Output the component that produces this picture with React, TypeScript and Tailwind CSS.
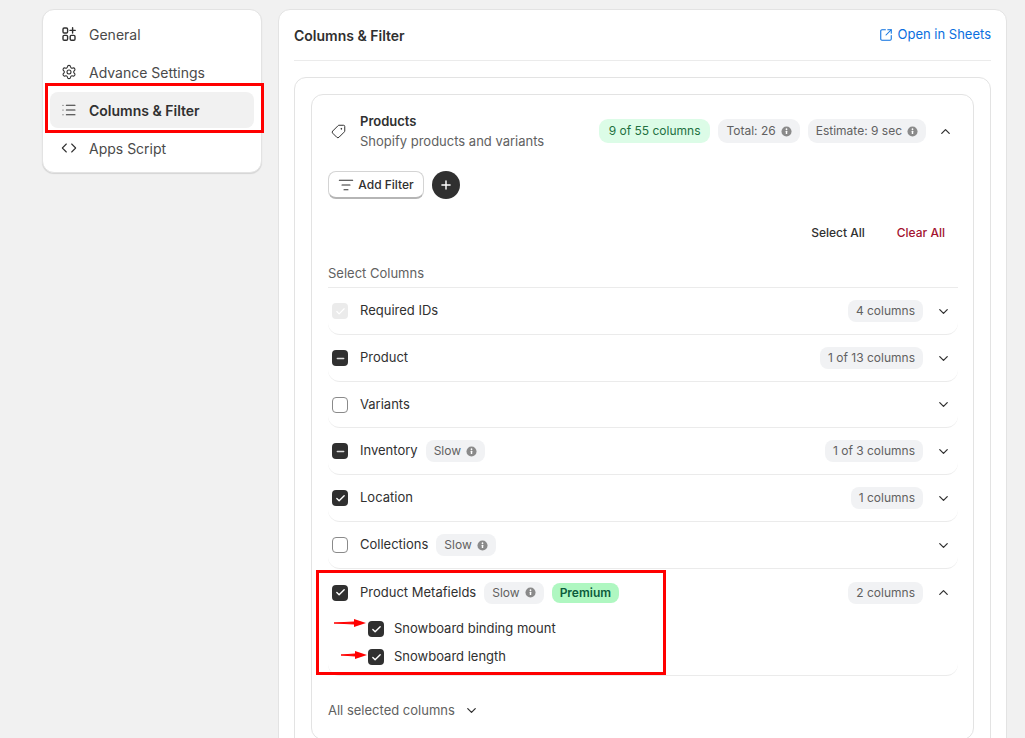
import React from "react";
import { Settings, List, Code, Tag, SquareArrowOutUpRight, ChevronDown, ChevronUp, ListFilter, Plus, Check, Minus } from "lucide-react";

function Info({ cls = "" }: { cls?: string }) {
  return (
    <svg viewBox="0 0 12 12" className={"w-[11px] h-[11px] shrink-0 " + cls}>
      <circle cx="6" cy="6" r="5.5" fill="#8a8a8a" />
      <rect x="5.2" y="5.2" width="1.6" height="3.6" rx="0.4" fill="#fff" />
      <circle cx="6" cy="3.5" r="0.95" fill="#fff" />
    </svg>
  );
}

function GeneralIcon() {
  return (
    <svg viewBox="0 0 16 16" className="w-[16px] h-[16px]" fill="none" stroke="#303030" strokeWidth="1.4">
      <rect x="2" y="2" width="4.6" height="5" rx="1.2" />
      <rect x="2" y="9.4" width="4.6" height="4.8" rx="1.2" />
      <rect x="9.2" y="9.4" width="4.8" height="4.8" rx="1.2" />
      <path d="M11.6 1.8v5.2M9 4.4h5.2" strokeLinecap="round" />
    </svg>
  );
}

function Box({ state }: { state: "on" | "off" | "mixed" | "disabled" }) {
  if (state === "off") return <span className="w-4 h-4 rounded-[4px] border border-[#8a8a8a] bg-white shrink-0" />;
  if (state === "disabled")
    return (
      <span className="w-4 h-4 rounded-[4px] bg-[#ebebeb] shrink-0 flex items-center justify-center">
        <Check size={11} strokeWidth={2.5} color="#fff" />
      </span>
    );
  return (
    <span className="w-4 h-4 rounded-[4px] bg-[#303030] shrink-0 flex items-center justify-center">
      {state === "on" ? <Check size={11} strokeWidth={3} color="#fff" /> : <Minus size={11} strokeWidth={3} color="#ddd" />}
    </span>
  );
}

function Pill({ children }: { children: React.ReactNode }) {
  return (
    <span className="h-[22px] px-2 rounded-lg bg-[#f1f2f4] text-[#616161] text-[12px] flex items-center gap-[5px] whitespace-nowrap">
      {children}
    </span>
  );
}

function Row({ state, label, slow, count, tall = true }: { state: "on" | "off" | "mixed" | "disabled"; label: string; slow?: boolean; count?: string; tall?: boolean }) {
  return (
    <div className={"flex items-center pl-1 pr-[7px] border-b border-[#ebebeb] rounded-b-xl " + (tall ? "h-[47px]" : "h-[46px]")}>
      <Box state={state} />
      <span className="ml-3 text-[13px] text-[#303030]">{label}</span>
      {slow && (
        <span className="ml-2">
          <Pill>
            Slow <Info />
          </Pill>
        </span>
      )}
      <span className="ml-auto" />
      {count && <Pill>{count}</Pill>}
      <ChevronDown size={15} color="#303030" className="ml-[13px]" />
    </div>
  );
}

function NavItem({ icon, label, active }: { icon: React.ReactNode; label: string; active?: boolean }) {
  return (
    <div className={"h-9 rounded-lg flex items-center pl-[11px] gap-3 text-[14px] text-[#303030] " + (active ? "bg-[#f1f1f1] font-semibold" : "")}>
      <span className="w-4 flex justify-center">{icon}</span>
      <span className={active ? "" : "text-[#4a4a4a]"}>{label}</span>
    </div>
  );
}

function Arrow({ cls, w }: { cls: string; w: number }) {
  return (
    <svg viewBox={`0 0 ${w} 10`} width={w} height={10} className={"absolute " + cls}>
      <path d={`M0 5 L${w - 12} 4 L${w - 12} 4.2 L${w - 12} 6 Z`} fill="#f00" stroke="#f00" strokeWidth="1" />
      <path d={`M${w - 12} 1 L${w} 5 L${w - 12} 9 Z`} fill="#f00" />
    </svg>
  );
}

export default function App() {
  return (
    <div
      className="relative h-[738px] w-[1025px] overflow-hidden bg-[#f1f1f1] flex items-start gap-4 pl-[42px] pt-[9px] text-[#303030]"
      style={{ fontFamily: "Inter, 'Liberation Sans', sans-serif" }}
    >
      <aside className="w-[220px] bg-white rounded-xl border border-[#e3e3e3] shadow-[0_1px_1px_rgba(0,0,0,0.12)] px-[7px] py-[6px] flex flex-col gap-[2px] shrink-0">
        <NavItem icon={<GeneralIcon />} label="General" />
        <NavItem icon={<Settings size={16} strokeWidth={1.6} color="#303030" />} label="Advance Settings" />
        <NavItem icon={<List size={16} strokeWidth={1.6} color="#303030" />} label="Columns & Filter" active />
        <NavItem icon={<Code size={16} strokeWidth={1.6} color="#303030" />} label="Apps Script" />
      </aside>

      <main className="w-[729px] h-[800px] shrink-0 bg-white rounded-xl border border-[#e3e3e3] px-[15px]">
        <div className="h-[51px] flex items-center justify-between border-b border-[#ebebeb] pt-[-1px]">
          <span className="text-[14px] font-semibold">Columns & Filter</span>
          <span className="flex items-center gap-[5px] text-[13px] text-[#0a6fe0]">
            <SquareArrowOutUpRight size={14} strokeWidth={1.8} />
            Open in Sheets
          </span>
        </div>

        <div className="mt-4 rounded-xl border border-[#e3e3e3] p-4 h-[700px]">
          <div className="rounded-xl border border-[#e3e3e3] px-4 h-[646px]">
            <div className="flex items-center h-[72px]">
              <Tag size={15} strokeWidth={1.6} color="#303030" className="ml-[3px] rotate-90" />
              <div className="ml-[14px] flex flex-col gap-[3px]">
                <span className="text-[13px] font-semibold leading-[17px]">Products</span>
                <span className="text-[13px] text-[#616161] leading-[17px]">Shopify products and variants</span>
              </div>
              <span className="ml-auto h-6 px-[10px] rounded-[9px] bg-[#dcfce7] text-[#22703f] text-[12px] flex items-center">9 of 55 columns</span>
              <span className="ml-2 h-6 px-2 rounded-[9px] bg-[#f1f2f4] text-[#616161] text-[12px] flex items-center gap-[5px]">Total: 26 <Info /></span>
              <span className="ml-2 h-6 px-2 rounded-[9px] bg-[#f1f2f4] text-[#616161] text-[12px] flex items-center gap-[5px]">Estimate: 9 sec <Info /></span>
              <ChevronUp size={15} color="#303030" className="ml-[12px] mr-[4px]" />
            </div>

            <div className="flex items-center gap-2 mt-1">
              <span className="h-7 w-24 rounded-lg border border-[#d4d4d4] border-b-[#b5b5b5] border-b-2 flex items-center justify-center gap-1 text-[12px] font-medium">
                <ListFilter size={16} strokeWidth={1.6} color="#303030" />
                Add Filter
              </span>
              <span className="w-7 h-7 rounded-full bg-[#303030] flex items-center justify-center">
                <Plus size={14} strokeWidth={2.5} color="#fff" />
              </span>
            </div>

            <div className="flex justify-end gap-8 mt-[25px] pr-3 text-[12px] font-medium leading-[18px]">
              <span>Select All</span>
              <span className="text-[#a3122f]">Clear All</span>
            </div>

            <div className="mt-[22px] text-[13px] text-[#616161] leading-[18px] pb-[5px] border-b border-[#ebebeb] -mr-[1px]">Select Columns</div>

            <div className="-mr-[1px]">
              <Row state="disabled" label="Required IDs" count="4 columns" />
              <Row state="mixed" label="Product" count="1 of 13 columns" />
              <Row state="off" label="Variants" tall={false} />
              <Row state="mixed" label="Inventory" slow count="1 of 3 columns" />
              <Row state="on" label="Location" count="1 columns" />
              <Row state="off" label="Collections" slow />
              <div className="h-[107px] pl-1 pr-[7px] border-b border-[#ebebeb] rounded-b-xl">
                <div className="flex items-center h-[47px]">
                  <Box state="on" />
                  <span className="ml-3 text-[13px]">Product Metafields</span>
                  <span className="ml-2"><Pill>Slow <Info /></Pill></span>
                  <span className="ml-2 h-[20px] px-2 rounded-lg bg-[#aff7c1] text-[#0b5c3c] text-[12px] font-semibold flex items-center">Premium</span>
                  <span className="ml-auto" />
                  <Pill>2 columns</Pill>
                  <ChevronUp size={15} color="#303030" className="ml-[13px]" />
                </div>
                <div className="flex items-center h-[28px] pl-9 -mt-[1px]">
                  <Box state="on" />
                  <span className="ml-[10px] text-[13px]">Snowboard binding mount</span>
                </div>
                <div className="flex items-center h-[28px] pl-9">
                  <Box state="on" />
                  <span className="ml-[10px] text-[13px]">Snowboard length</span>
                </div>
              </div>
            </div>

            <div className="flex items-center gap-[9px] mt-[25px] text-[13px] text-[#616161] leading-[18px]">
              All selected columns
              <ChevronDown size={15} color="#303030" />
            </div>
          </div>
        </div>
      </main>

      <div className="absolute left-[45px] top-[83px] w-[219px] h-[50px] border-[3px] border-[#f00]" />
      <div className="absolute left-[316px] top-[570px] w-[350px] h-[105px] border-[3px] border-[#f00]" />
      <Arrow cls="left-[334px] top-[618px]" w={32} />
      <Arrow cls="left-[341px] top-[650px]" w={26} />
    </div>
  );
}
